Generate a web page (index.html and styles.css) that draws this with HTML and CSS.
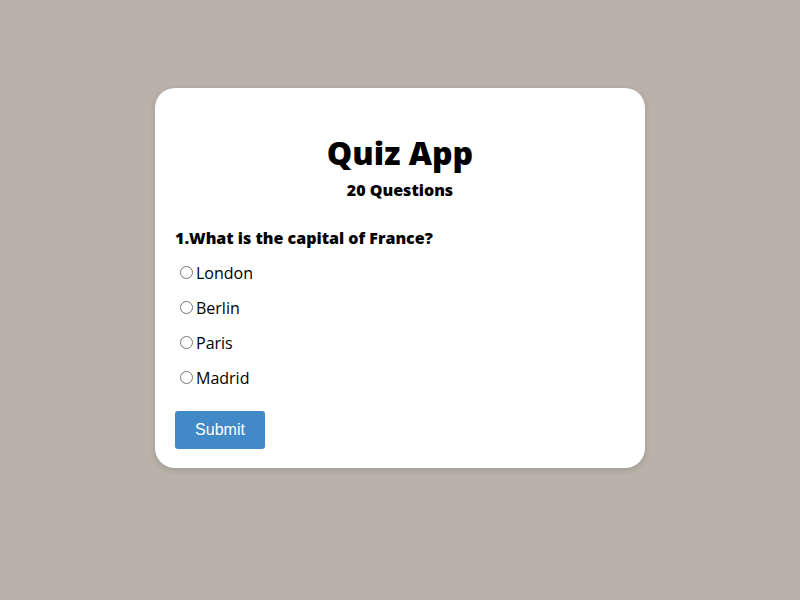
FILE: index.html
```html
<!DOCTYPE html>
<html lang="en">
<head>
<meta charset="utf-8">
<title>Quiz App</title>
<link rel="stylesheet" href="styles.css">
</head>
<body>
<div class="card">
  <h1 class="title">Quiz App</h1>
  <h3 class="count">20 Questions</h3>
  <p class="question">1.What is the capital of France?</p>
  <ul class="options">
    <li><label><input type="radio" name="q1"><span>London</span></label></li>
    <li><label><input type="radio" name="q1"><span>Berlin</span></label></li>
    <li><label><input type="radio" name="q1"><span>Paris</span></label></li>
    <li><label><input type="radio" name="q1"><span>Madrid</span></label></li>
  </ul>
  <button class="submit" type="button">Submit</button>
</div>
</body>
</html>
```
FILE: styles.css
```css
* { box-sizing: border-box; }
html, body { height: 100%; }
body {
  margin: 0;
  background: #bab2a9;
  font-family: "Open Sans", "Noto Sans", sans-serif;
  color: #000;
  display: flex;
  justify-content: center;
  align-items: flex-start;
  padding-top: 88px;
}
.card {
  width: 490px;
  height: 380px;
  background: #fff;
  border-radius: 20px;
  padding: 20px 20px;
  box-shadow: 0 2px 6px rgba(0,0,0,0.15);
}
.title {
  margin: 25px 0 0;
  text-align: center;
  font-size: 32px;
  font-weight: 800;
  line-height: 40px;
}
.count {
  margin: 5px 0 0;
  text-align: center;
  font-size: 16px;
  font-weight: 800;
  line-height: 24px;
}
.question {
  margin: 24px 0 0;
  font-size: 16px;
  font-weight: 800;
  line-height: 24px;
}
.options {
  list-style: none;
  margin: 5px 0 0;
  padding: 0;
}
.options li {
  height: 35px;
  display: flex;
  align-items: center;
  font-size: 16px;
}
.options label { display: flex; align-items: center; }
.options input {
  margin: 0 3px 0 5px;
  width: 13px;
  height: 13px;
}
.submit {
  margin-top: 16px;
  width: 90px;
  height: 38px;
  border: none;
  border-radius: 3px;
  background: #4189c7;
  color: #fff;
  font-family: "Liberation Sans", Arial, sans-serif;
  font-size: 16px;
}
```
